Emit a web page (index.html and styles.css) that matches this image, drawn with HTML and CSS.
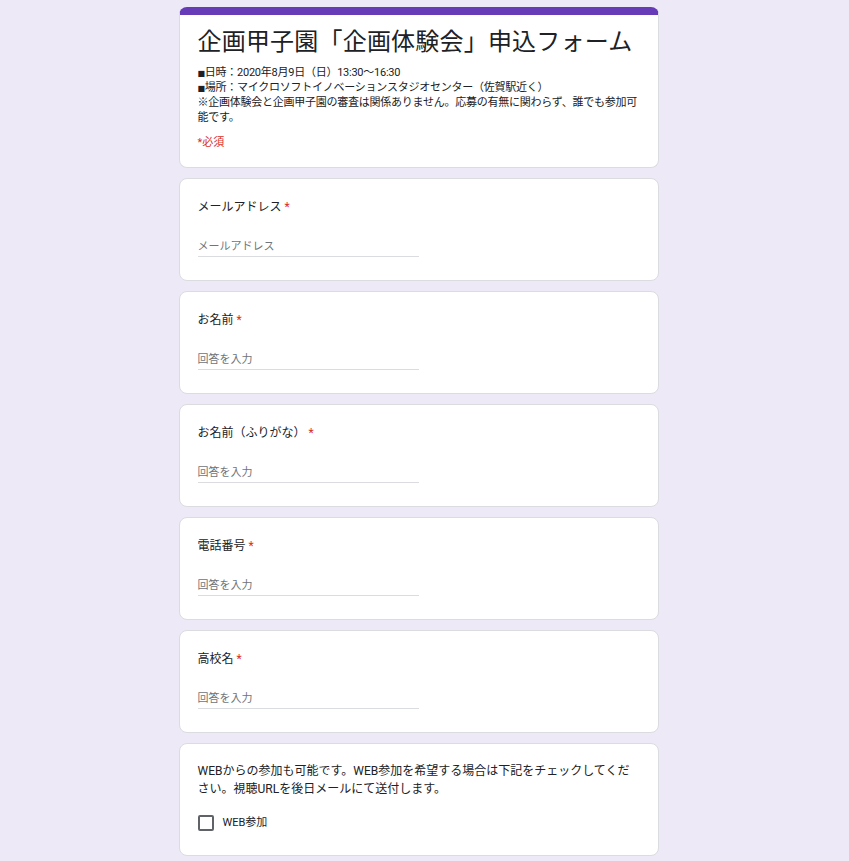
FILE: index.html
```html
<!DOCTYPE html>
<html lang="ja">
<head>
<meta charset="utf-8">
<title>企画甲子園「企画体験会」申込フォーム</title>
<link rel="stylesheet" href="styles.css">
</head>
<body>
<div class="page">
  <div class="form">
    <div class="card header">
      <h1 class="title">企画甲子園「企画体験会」申込フォーム</h1>
      <div class="desc"><span class="sq">■</span>日時：2020年8月9日（日）13:30～16:30<br><span class="sq">■</span>場所：マイクロソフトイノベーションスタジオセンター（佐賀駅近く）<br>※企画体験会と企画甲子園の審査は関係ありません。応募の有無に関わらず、誰でも参加可能です。</div>
      <div class="required-note">*必須</div>
    </div>

    <div class="card question">
      <div class="label">メールアドレス<span class="ast">*</span></div>
      <div class="input"><span class="ph">メールアドレス</span></div>
    </div>

    <div class="card question">
      <div class="label">お名前<span class="ast">*</span></div>
      <div class="input"><span class="ph">回答を入力</span></div>
    </div>

    <div class="card question">
      <div class="label">お名前（ふりがな）<span class="ast">*</span></div>
      <div class="input"><span class="ph">回答を入力</span></div>
    </div>

    <div class="card question">
      <div class="label">電話番号<span class="ast">*</span></div>
      <div class="input"><span class="ph">回答を入力</span></div>
    </div>

    <div class="card question">
      <div class="label">高校名<span class="ast">*</span></div>
      <div class="input"><span class="ph">回答を入力</span></div>
    </div>

    <div class="card question check-q">
      <div class="label long">WEBからの参加も可能です。WEB参加を希望する場合は下記をチェックしてください。視聴URLを後日メールにて送付します。</div>
      <div class="option">
        <span class="box"></span>
        <span class="opt-label">WEB参加</span>
      </div>
    </div>
  </div>
</div>
</body>
</html>
```

FILE: styles.css
```css
html, body {
  margin: 0;
  padding: 0;
  background: #ede9f7;
}

body {
  font-family: Roboto, "Noto Sans CJK JP", sans-serif;
  color: #202124;
}

.page {
  padding: 7px 12px 20px 0;
}

.form {
  width: 480px;
  margin: 0 auto;
  display: flex;
  flex-direction: column;
  gap: 10px;
}

.card {
  box-sizing: border-box;
  background: #fff;
  border: 1px solid #dadce0;
  border-radius: 8px;
  padding: 18px 24px 24px 18px;
}

.header {
  border-top: 8px solid #673ab7;
  padding: 11px 17px 17px 18px;
}

.title {
  margin: 0;
  font-size: 24px;
  line-height: 32px;
  font-weight: 400;
  letter-spacing: 0.2px;
  color: #202124;
  white-space: nowrap;
}

.desc {
  margin-top: 7px;
  font-size: 11px;
  line-height: 15px;
  letter-spacing: -0.25px;
}

.sq {
  font-family: "DejaVu Sans", sans-serif;
  font-size: 8px;
  line-height: 0;
}

.required-note {
  margin-top: 10px;
  font-size: 11px;
  line-height: 15px;
  color: #d93025;
}

.label {
  font-size: 12px;
  line-height: 18px;
  padding-top: 1px;
}

.ast {
  color: #d93025;
  margin-left: 3px;
}

.input {
  margin-top: 23px;
  width: 221px;
  padding-bottom: 1px;
  border-bottom: 1px solid #dadce0;
  font-size: 11px;
  line-height: 16px;
}

.question {
  padding-bottom: 23px;
}

.ph {
  color: #70757a;
}

.check-q {
  padding-top: 18px;
  padding-bottom: 24px;
}

.label.long {
  line-height: 17.5px;
}

.option {
  margin-top: 17px;
  display: flex;
  align-items: center;
  gap: 9px;
  height: 16px;
}

.box {
  box-sizing: border-box;
  width: 16px;
  height: 16px;
  border: 2px solid #5f6368;
  border-radius: 2px;
}

.opt-label {
  font-size: 11px;
  line-height: 16px;
}
```
